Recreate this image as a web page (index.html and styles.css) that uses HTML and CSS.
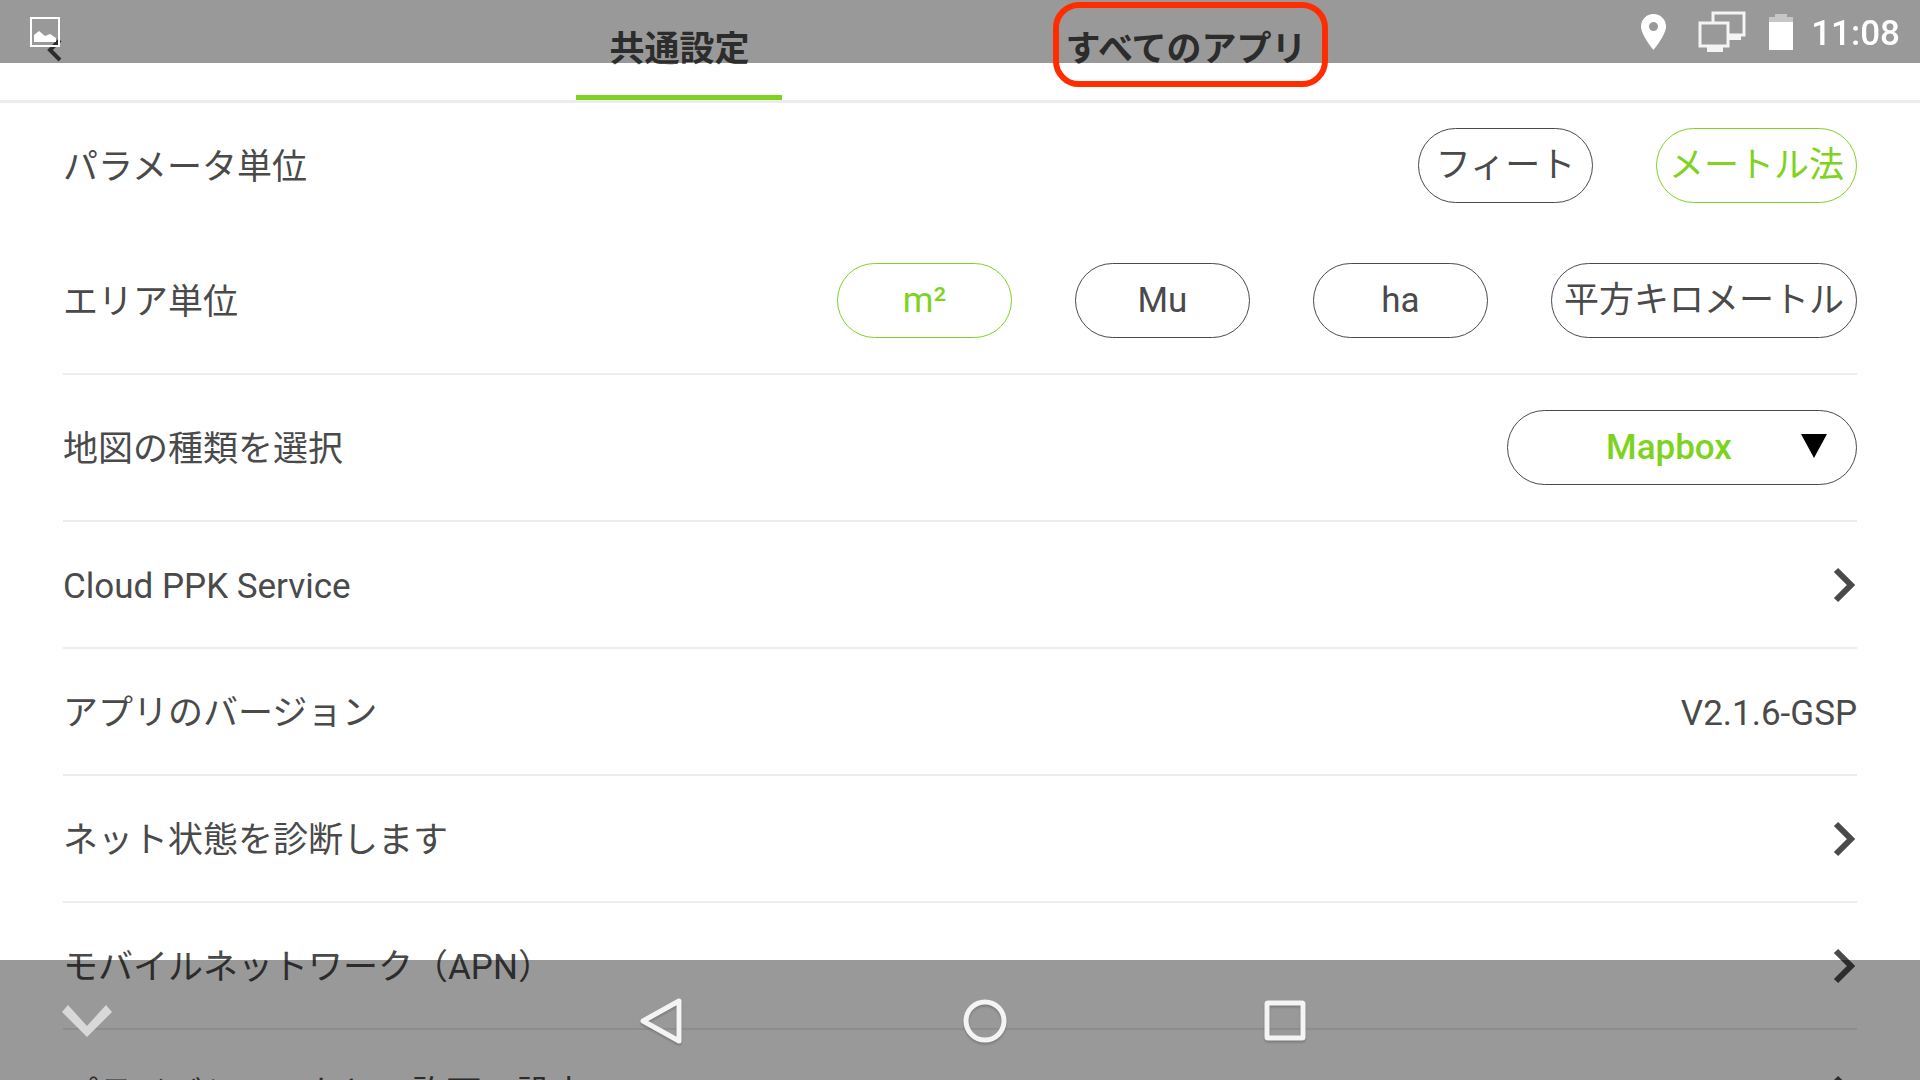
FILE: index.html
```html
<!DOCTYPE html>
<html lang="ja">
<head>
    <meta charset="UTF-8">
    <meta name="viewport" content="width=device-width, initial-scale=1.0">
    <title>共通設定</title>
    <link rel="stylesheet" href="styles.css">
</head>
<body>
    <header class="header">
        <a href="#" class="back" aria-label="戻る">
            <svg width="16" height="24" viewBox="0 0 16 24"><path d="M14 2L4 12l10 10" fill="none" stroke="#4a4a4a" stroke-width="4"/></svg>
        </a>
        <nav class="tabs">
            <a href="#" class="tab active">共通設定</a>
            <a href="#" class="tab marked">すべてのアプリ</a>
        </nav>
    </header>

    <main class="settings">
        <div class="row row-plain">
            <span class="label">パラメータ単位</span>
            <div class="options">
                <button class="pill">フィート</button>
                <button class="pill selected">メートル法</button>
            </div>
        </div>
        <div class="row row-tall">
            <span class="label">エリア単位</span>
            <div class="options">
                <button class="pill selected">m²</button>
                <button class="pill">Mu</button>
                <button class="pill">ha</button>
                <button class="pill">平方キロメートル</button>
            </div>
        </div>
        <div class="row row-tall">
            <label class="label" for="mapType">地図の種類を選択</label>
            <div class="select-box">
                <select id="mapType">
                    <option>Mapbox</option>
                </select>
                <svg class="arrow-down" width="26" height="24" viewBox="0 0 26 24"><path d="M0 0h26L13 24z" fill="#000"/></svg>
            </div>
        </div>
        <a href="#" class="row">
            <span class="label">Cloud PPK Service</span>
            <svg class="chevron" width="24" height="36" viewBox="0 0 24 36"><path d="M3 3l15 15L3 33" fill="none" stroke="#4a4a4a" stroke-width="6"/></svg>
        </a>
        <div class="row">
            <span class="label">アプリのバージョン</span>
            <span class="label">V2.1.6-GSP</span>
        </div>
        <a href="#" class="row">
            <span class="label">ネット状態を診断します</span>
            <svg class="chevron" width="24" height="36" viewBox="0 0 24 36"><path d="M3 3l15 15L3 33" fill="none" stroke="#4a4a4a" stroke-width="6"/></svg>
        </a>
        <a href="#" class="row">
            <span class="label">モバイルネットワーク（APN）</span>
            <svg class="chevron" width="24" height="36" viewBox="0 0 24 36"><path d="M3 3l15 15L3 33" fill="none" stroke="#4a4a4a" stroke-width="6"/></svg>
        </a>
        <a href="#" class="row">
            <span class="label">プライバシーのもとの許可の設定</span>
            <svg class="chevron" width="24" height="36" viewBox="0 0 24 36"><path d="M3 3l15 15L3 33" fill="none" stroke="#4a4a4a" stroke-width="6"/></svg>
        </a>
    </main>

    <!-- Android status bar -->
    <div class="status-bar">
        <svg width="30" height="30" viewBox="0 0 30 30">
            <rect x="1" y="1" width="28" height="28" fill="none" stroke="#fff" stroke-width="2"/>
            <path d="M4 25v-7l5-4 6 5 5-2 6 4v4z" fill="#fff"/>
        </svg>
        <div class="status-icons">
            <svg width="25" height="36" viewBox="0 0 25 36"><path fill="#fff" fill-rule="evenodd" d="M12.500 0C5.500 0 0 5.500 0 12.500 0 21 12.500 36 12.500 36S25 21 25 12.500C25 5.500 19.500 0 12.500 0zm0 8a4.500 4.500 0 1 1 0 9 4.500 4.500 0 0 1 0-9z"/></svg>
            <svg class="screens" width="48" height="42" viewBox="0 0 48 42">
                <path d="M15 11V2h31v22H31M2 12h28v23H2z" fill="none" stroke="#f4f4f4" stroke-width="3"/>
                <path d="M31 24h12v5H31zM9 35h16v6H9z" fill="#f4f4f4"/>
            </svg>
            <svg class="battery" width="24" height="36" viewBox="0 0 24 36">
                <path d="M0 3h6V0h12v3h6v5H0z" fill="#c6c6c6"/>
                <path d="M0 8h24v28H0z" fill="#fff"/>
            </svg>
            <span class="clock">11:08</span>
        </div>
    </div>

    <!-- Android navigation bar -->
    <div class="nav-bar">
        <button aria-label="隠す">
            <svg width="50" height="32" viewBox="0 0 50 32"><path d="M0 7l6-7 19 21L44 0l6 7-25 25z" fill="#d8d8d8"/></svg>
        </button>
        <div class="nav-buttons">
            <button aria-label="戻る">
                <svg width="92" height="48" viewBox="0 0 92 48"><path d="M40 4v40L4 24z" fill="none" stroke="#f4f4f4" stroke-width="5" stroke-linejoin="round"/></svg>
            </button>
            <button aria-label="ホーム">
                <svg width="92" height="48" viewBox="0 0 92 48"><circle cx="46" cy="24" r="19" fill="none" stroke="#f4f4f4" stroke-width="5"/></svg>
            </button>
            <button aria-label="履歴">
                <svg width="92" height="48" viewBox="0 0 92 48"><rect x="28" y="6" width="36" height="35" rx="1" fill="none" stroke="#f4f4f4" stroke-width="5"/></svg>
            </button>
        </div>
    </div>
</body>
</html>
```
FILE: styles.css
```css
* {
    box-sizing: border-box;
}
html, body {
    height: 100%;
}
body {
    margin: 0;
    overflow: hidden;
    background-color: #fff;
    color: #4a4a4a;
    font-family: Roboto, "Noto Sans CJK JP", sans-serif;
    font-size: 35px;
    line-height: 48px;
}
a {
    color: inherit;
    text-decoration: none;
}
button, select {
    font: inherit;
    color: inherit;
    background: none;
    margin: 0;
}
svg {
    display: block;
}

/* Header */
.header {
    position: relative;
    height: 103px;
    border-bottom: 3px solid #ececec;
}
.back {
    position: absolute;
    left: 46px;
    top: 38px;
}
.tabs {
    display: flex;
    justify-content: center;
    gap: 250px;
    height: 100px;
    padding-right: 4px;
}
.tab {
    position: relative;
    padding: 26px 33px 0;
    font-weight: bold;
    border-bottom: 5px solid transparent;
}
.tab.active {
    border-bottom-color: #7ed321;
}
.marked::after {
    content: "";
    position: absolute;
    left: 21px;
    right: 12px;
    top: 2px;
    height: 73px;
    border: 6px solid #ff2d00;
    border-radius: 26px;
    z-index: 2;
}

/* Settings list */
.settings {
    padding: 0 63px;
}
.row {
    display: flex;
    align-items: center;
    justify-content: space-between;
    height: 127px;
    border-bottom: 2px solid #ececec;
}
.row-plain {
    height: 125px;
    border-bottom: none;
}
.row-tall {
    height: 147px;
}
.label {
    padding-top: 4px;
}
.options {
    display: flex;
    gap: 63px;
}
.pill {
    min-width: 175px;
    height: 75px;
    padding: 0 12px;
    border: 1px solid #4a4a4a;
    border-radius: 38px;
    white-space: nowrap;
}
.pill.selected {
    color: #7ed321;
    border-color: #7ed321;
}
.select-box {
    position: relative;
    width: 350px;
}
.select-box select {
    display: block;
    width: 100%;
    height: 75px;
    padding: 0 60px 0 34px;
    border: 1px solid #4a4a4a;
    border-radius: 38px;
    appearance: none;
    color: #7ed321;
    font-weight: 500;
    text-align: center;
    text-align-last: center;
}
.arrow-down {
    position: absolute;
    right: 30px;
    top: 24px;
    pointer-events: none;
}

/* System bars */
.status-bar, .nav-bar {
    position: fixed;
    left: 0;
    right: 0;
    display: flex;
    align-items: center;
    background-color: rgba(0, 0, 0, 0.4);
}
.status-bar {
    top: 0;
    height: 63px;
    justify-content: space-between;
    padding: 0 20px 0 30px;
    z-index: 1;
}
.status-icons {
    display: flex;
    align-items: center;
    color: #fff;
}
.screens {
    margin-left: 32px;
}
.battery {
    margin: 0 18px 0 23px;
}
.clock {
    padding-top: 4px;
    font-weight: 500;
}
.nav-bar {
    bottom: 0;
    height: 120px;
    padding: 2px 62px 0;
}
.nav-bar button {
    padding: 0;
    border: none;
}
.nav-buttons {
    flex: 1;
    display: flex;
    justify-content: center;
    gap: 208px;
    filter: drop-shadow(0 2px 1px rgba(0, 0, 0, 0.2));
}
```
